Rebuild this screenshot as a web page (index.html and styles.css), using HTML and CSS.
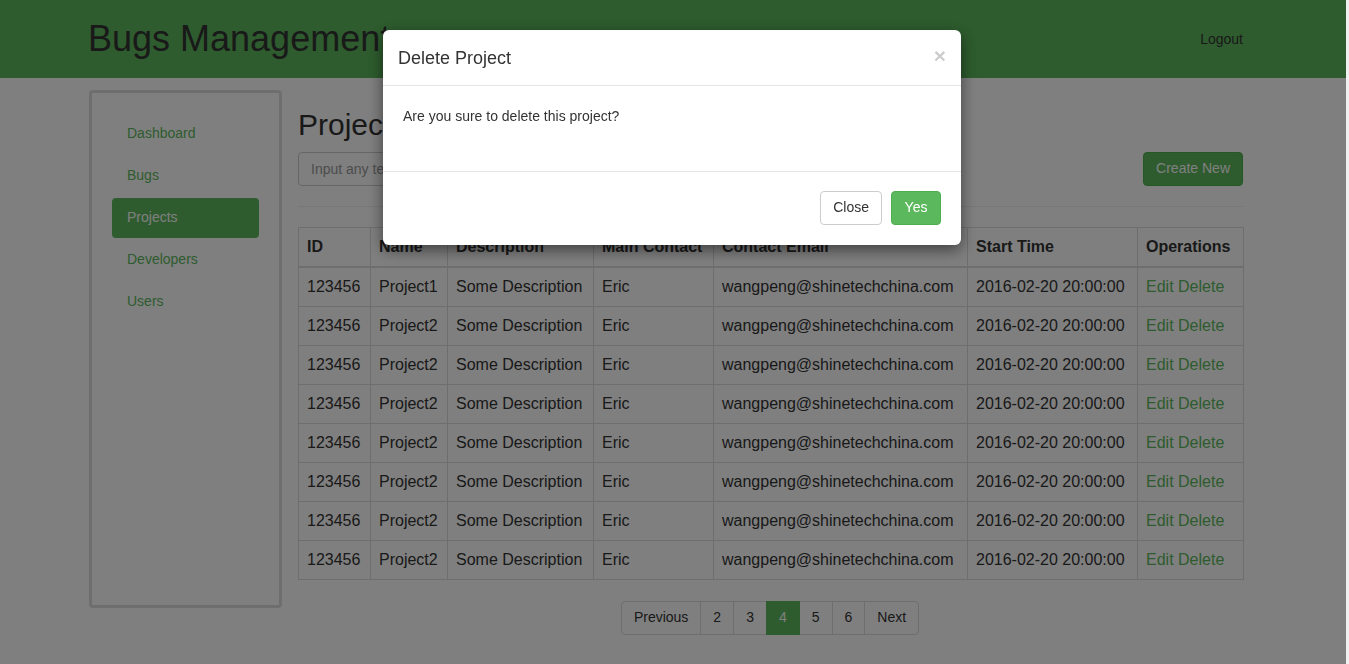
FILE: index.html
```html
<!DOCTYPE html>
<html>
<head>
<meta charset="utf-8">
<title>Bugs Management</title>
<link rel="stylesheet" href="styles.css">
</head>
<body>
<header class="topbar">
  <div class="container topbar-inner">
    <div class="brand">Bugs Management</div>
    <a class="logout" href="#">Logout</a>
  </div>
</header>
<div class="container layout">
  <aside class="sidebar">
    <ul class="pills">
      <li><a href="#">Dashboard</a></li>
      <li><a href="#">Bugs</a></li>
      <li class="active"><a href="#">Projects</a></li>
      <li><a href="#">Developers</a></li>
      <li><a href="#">Users</a></li>
    </ul>
  </aside>
  <main class="main">
    <h1 class="page-title">Projects</h1>
    <div class="toolbar">
      <input class="search" type="text" placeholder="Input any text to search">
      <button class="btn btn-green">Create New</button>
    </div>
    <hr class="divider">
    <table class="grid">
      <colgroup>
        <col class="c-id"><col class="c-name"><col class="c-desc"><col class="c-contact"><col class="c-email"><col class="c-time"><col class="c-ops">
      </colgroup>
      <thead>
        <tr><th>ID</th><th>Name</th><th>Description</th><th>Main Contact</th><th>Contact Email</th><th>Start Time</th><th>Operations</th></tr>
      </thead>
      <tbody>
        <tr><td>123456</td><td>Project1</td><td>Some Description</td><td>Eric</td><td>wangpeng@shinetechchina.com</td><td>2016-02-20 20:00:00</td><td><a href="#">Edit</a> <a href="#">Delete</a></td></tr>
        <tr><td>123456</td><td>Project2</td><td>Some Description</td><td>Eric</td><td>wangpeng@shinetechchina.com</td><td>2016-02-20 20:00:00</td><td><a href="#">Edit</a> <a href="#">Delete</a></td></tr>
        <tr><td>123456</td><td>Project2</td><td>Some Description</td><td>Eric</td><td>wangpeng@shinetechchina.com</td><td>2016-02-20 20:00:00</td><td><a href="#">Edit</a> <a href="#">Delete</a></td></tr>
        <tr><td>123456</td><td>Project2</td><td>Some Description</td><td>Eric</td><td>wangpeng@shinetechchina.com</td><td>2016-02-20 20:00:00</td><td><a href="#">Edit</a> <a href="#">Delete</a></td></tr>
        <tr><td>123456</td><td>Project2</td><td>Some Description</td><td>Eric</td><td>wangpeng@shinetechchina.com</td><td>2016-02-20 20:00:00</td><td><a href="#">Edit</a> <a href="#">Delete</a></td></tr>
        <tr><td>123456</td><td>Project2</td><td>Some Description</td><td>Eric</td><td>wangpeng@shinetechchina.com</td><td>2016-02-20 20:00:00</td><td><a href="#">Edit</a> <a href="#">Delete</a></td></tr>
        <tr><td>123456</td><td>Project2</td><td>Some Description</td><td>Eric</td><td>wangpeng@shinetechchina.com</td><td>2016-02-20 20:00:00</td><td><a href="#">Edit</a> <a href="#">Delete</a></td></tr>
        <tr><td>123456</td><td>Project2</td><td>Some Description</td><td>Eric</td><td>wangpeng@shinetechchina.com</td><td>2016-02-20 20:00:00</td><td><a href="#">Edit</a> <a href="#">Delete</a></td></tr>
      </tbody>
    </table>
    <nav class="pager-wrap">
      <ul class="pager">
        <li><a href="#">Previous</a></li>
        <li><a href="#">2</a></li>
        <li><a href="#">3</a></li>
        <li class="active"><a href="#">4</a></li>
        <li><a href="#">5</a></li>
        <li><a href="#">6</a></li>
        <li><a href="#">Next</a></li>
      </ul>
    </nav>
  </main>
</div>

<div class="backdrop"></div>
<div class="modal">
  <div class="modal-header">
    <h4 class="modal-title">Delete Project</h4>
    <button class="close" type="button">&times;</button>
  </div>
  <div class="modal-body">
    <p>Are you sure to delete this project?</p>
  </div>
  <div class="modal-footer">
    <button class="btn btn-default">Close</button>
    <button class="btn btn-green">Yes</button>
  </div>
</div>
</body>
</html>
```

FILE: styles.css
```css
* { box-sizing: border-box; }
html { margin: 0; padding: 0; background: #f0f0f0; }
body {
  margin: 0;
  padding: 0;
  font-family: "Liberation Sans", Arial, sans-serif;
  font-size: 14px;
  line-height: 1.42857;
  color: #333;
  background: #fff;
  width: 1346px;
  height: 664px;
  overflow: hidden;
}
a { color: #5cb85c; text-decoration: none; }
.container { width: 1154px; margin-left: 89px; }

.topbar { background: #5cb85c; height: 78px; }
.topbar-inner { height: 78px; display: flex; align-items: center; justify-content: space-between; }
.brand { font-size: 36px; color: #333; line-height: 1; margin-left: -1px; }
.logout { color: #333; font-size: 14px; padding-top: 2px; }

.layout { display: flex; gap: 16px; margin-top: 12px; align-items: flex-start; }
.sidebar {
  width: 193px;
  height: 518px;
  border: 3px solid #ddd;
  border-radius: 4px;
  padding: 19px 20px;
  flex-shrink: 0;
}
.pills { list-style: none; margin: 0; padding: 0; }
.pills li { margin-top: 2px; }
.pills a { display: block; padding: 10px 15px; border-radius: 4px; color: #5cb85c; }
.pills li.active a { background: #5cb85c; color: #fff; }

.main { width: 945px; }
.page-title { font-size: 30px; font-weight: 500; line-height: 1.1; margin: 18px 0 11px; }
.toolbar { display: flex; justify-content: space-between; align-items: center; }
.search {
  width: 300px;
  height: 34px;
  padding: 6px 12px;
  border: 1px solid #ccc;
  border-radius: 4px;
  font-family: inherit;
  font-size: 14px;
  color: #555;
}
.search::placeholder { color: #999; }
.btn {
  display: inline-block;
  font-family: inherit;
  font-size: 14px;
  line-height: 1.42857;
  padding: 6px 12px;
  border: 1px solid transparent;
  border-radius: 4px;
  cursor: pointer;
  height: 34px;
}
.btn-green { background: #5cb85c; border-color: #4cae4c; color: #fff; }
.btn-default { background: #fff; border-color: #ccc; color: #333; }
.divider { border: 0; border-top: 1px solid #eee; margin: 20px 0 20px; }

.grid { width: 945px; border-collapse: collapse; table-layout: fixed; font-size: 16px; }
.c-id { width: 72px; } .c-name { width: 77px; } .c-desc { width: 146px; } .c-contact { width: 120px; }
.c-email { width: 254px; } .c-time { width: 170px; } .c-ops { width: 106px; }
.grid th, .grid td { border: 1px solid #ddd; padding: 8px; text-align: left; line-height: 1.375; white-space: nowrap; overflow: hidden; }
.grid th { font-weight: bold; border-bottom-width: 2px; }

.pager-wrap { display: flex; justify-content: center; margin-top: 21px; }
.pager { list-style: none; display: flex; margin: 0 1px 0 0; padding: 0; }
.pager li a {
  display: block;
  padding: 6px 12px;
  border: 1px solid #ddd;
  margin-left: -1px;
  color: #333;
  background: #fff;
  line-height: 1.42857;
}
.pager li:first-child a { margin-left: 0; border-radius: 4px 0 0 4px; }
.pager li:last-child a { border-radius: 0 4px 4px 0; }
.pager li.active a { background: #5cb85c; border-color: #5cb85c; color: #fff; position: relative; }

.backdrop { position: fixed; top: 0; left: 0; bottom: 0; width: 1346px; background: rgba(0,0,0,0.5); }
.modal {
  position: fixed;
  top: 30px;
  left: 383px;
  width: 578px;
  background: #fff;
  border-radius: 6px;
  box-shadow: 0 5px 15px rgba(0,0,0,0.5);
}
.modal-header { padding: 15px 15px 14px; border-bottom: 1px solid #e5e5e5; display: flex; justify-content: space-between; align-items: flex-start; }
.modal-title { margin: 0; font-size: 18px; font-weight: 500; line-height: 26px; }
.close { background: none; border: 0; padding: 0; font-size: 21px; font-weight: bold; line-height: 1; color: #000; opacity: 0.2; margin-top: 0; font-family: inherit; }
.modal-body { padding: 21px 20px 44px; }
.modal-body p { margin: 0; }
.modal-footer { padding: 19px 20px 20px; border-top: 1px solid #e5e5e5; display: flex; justify-content: flex-end; gap: 9px; }
.modal-footer .btn-green { width: 50px; }
```
